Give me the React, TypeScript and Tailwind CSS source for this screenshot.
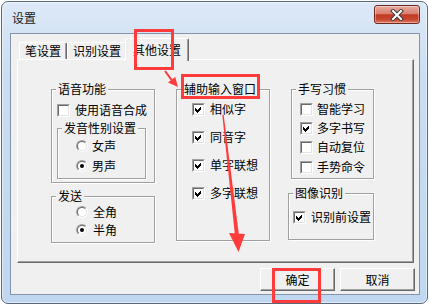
import React from 'react';

const RED = '#ff3b3b';

function CheckBox({ checked }: { checked?: boolean }) {
  return (
    <div className="w-[13px] h-[13px] shrink-0 border border-t-[#a0a0a0] border-l-[#a0a0a0] border-b-white border-r-white">
      <div className="w-full h-full border border-t-[#696969] border-l-[#696969] border-b-[#e3e3e3] border-r-[#e3e3e3] bg-white flex items-center justify-center">
        {checked && (
          <svg width="9" height="9" viewBox="0 0 9 9" shapeRendering="crispEdges">
            <path d="M1 3 L3 5 L7 1 L7 4 L3 8 L1 6 Z" fill="#000" />
          </svg>
        )}
      </div>
    </div>
  );
}

function Radio({ checked }: { checked?: boolean }) {
  return (
    <div className="w-[12px] h-[12px] shrink-0 rounded-full border border-t-[#a0a0a0] border-l-[#a0a0a0] border-b-white border-r-white">
      <div className="w-full h-full rounded-full border border-t-[#696969] border-l-[#696969] border-b-[#e3e3e3] border-r-[#e3e3e3] bg-white flex items-center justify-center">
        {checked && <div className="w-[4px] h-[4px] rounded-full bg-black" />}
      </div>
    </div>
  );
}

function Group({
  title,
  className,
  titleClass,
  children,
}: {
  title: string;
  className: string;
  titleClass: string;
  children: React.ReactNode;
}) {
  return (
    <div
      className={`border border-[#a0a0a0] shadow-[inset_1px_1px_0_#fff,1px_1px_0_#fff] flex flex-col ${className}`}
    >
      <div className={`-mt-[8px] self-start bg-[#f0f0f0] px-[2px] h-[14px] leading-[14px] ${titleClass}`}>
        {title}
      </div>
      {children}
    </div>
  );
}

function Tab({ label, active, className }: { label: string; active?: boolean; className: string }) {
  if (active) {
    return (
      <div
        className={`relative z-10 -ml-[2px] h-[23px] bg-[#f0f0f0] border-t border-l border-r border-t-white border-l-white border-r-[#696969] rounded-t-[2px] shadow-[inset_-1px_0_0_#a0a0a0] flex justify-center pt-[4px] leading-[14px] ${className}`}
      >
        {label}
      </div>
    );
  }
  return (
    <div
      className={`mb-[2px] h-[17px] border-t border-l border-r border-t-white border-l-white border-r-[#696969] rounded-t-[2px] shadow-[inset_-1px_0_0_#a0a0a0] flex items-center justify-center leading-[14px] ${className}`}
    >
      {label}
    </div>
  );
}

function Button({ label }: { label: string }) {
  return (
    <div className="w-[75px] h-[23px] border border-t-white border-l-white border-r-[#696969] border-b-[#696969] shadow-[inset_-1px_-1px_0_#a0a0a0,0_0_0_0_#000] bg-[#f0f0f0] flex items-center justify-center leading-[14px]">
      {label}
    </div>
  );
}

export default function App() {
  return (
    <div className="relative w-[429px] h-[306px] overflow-hidden bg-white text-[12px] text-black font-['Noto_Sans_CJK_SC','Noto_Sans',sans-serif]">
      {/* Window */}
      <div className="ml-[1px] mt-[1px] w-[427px] h-[303px] rounded-[7px] border border-[#5b6878] bg-[linear-gradient(180deg,#dde9f7_0%,#c9ddf2_25%,#bfd7f0_100%)] shadow-[inset_0_0_0_1px_rgba(255,255,255,0.55)] flex flex-col pl-[8px] pr-[7px] pb-[8px]">
        {/* Title bar */}
        <div className="h-[31px] flex items-start justify-between">
          <div className="ml-[2px] mt-[9px] leading-[14px] text-[#1a1a1a]">设置</div>
          <div className="mt-[3px] w-[46px] h-[19px] rounded-[3px] border border-[#6e2a22] bg-[linear-gradient(180deg,#e9aca0_0%,#d98070_45%,#c23a25_52%,#c8452f_78%,#e07d62_100%)] shadow-[inset_0_0_0_1px_rgba(255,255,255,0.35)] flex items-center justify-center">
            <svg width="14" height="12" viewBox="0 0 14 12">
              <path d="M3 2 L11 10 M11 2 L3 10" stroke="#3c3c3c" strokeWidth="4" strokeLinecap="square" />
              <path d="M3 2 L11 10 M11 2 L3 10" stroke="#fff" strokeWidth="2" strokeLinecap="square" />
            </svg>
          </div>
        </div>

        {/* Client area */}
        <div className="w-[410px] h-[262px] border border-[#8394ab] bg-[#f0f0f0] flex flex-col pt-[4px]">
          {/* Tabs */}
          <div className="flex items-end ml-[8px]">
            <Tab label="笔设置" className="w-[48px]" />
            <Tab label="识别设置" className="w-[60px]" />
            <Tab label="其他设置" active className="w-[64px]" />
          </div>

          {/* Panel */}
          <div className="-mt-[2px] ml-[6px] w-[397px] h-[204px] border border-t-white border-l-white border-r-[#696969] border-b-[#696969] shadow-[inset_-1px_-1px_0_#a0a0a0] flex items-start pl-[33px] pt-[29px]">
            {/* Column 1 */}
            <div className="w-[104px] flex flex-col">
              <Group title="语音功能" className="w-[104px] h-[94px]" titleClass="ml-[4px]">
                <div className="mt-[7px] ml-[5px] h-[14px] flex items-center gap-[5px]">
                  <CheckBox />
                  <span>使用语音合成</span>
                </div>
                <Group title="发音性别设置" className="mt-[11px] ml-[5px] w-[89px] h-[51px]" titleClass="ml-[4px]">
                  <div className="mt-[4px] ml-[18px] h-[14px] flex items-center gap-[4px]">
                    <Radio />
                    <span>女声</span>
                  </div>
                  <div className="mt-[6px] ml-[18px] h-[14px] flex items-center gap-[4px]">
                    <Radio checked />
                    <span>男声</span>
                  </div>
                </Group>
              </Group>
              <Group title="发送" className="mt-[13px] w-[104px] h-[47px]" titleClass="ml-[4px]">
                <div className="mt-[2px] ml-[24px] h-[14px] flex items-center gap-[5px]">
                  <Radio />
                  <span>全角</span>
                </div>
                <div className="mt-[4px] ml-[24px] h-[14px] flex items-center gap-[5px]">
                  <Radio checked />
                  <span>半角</span>
                </div>
              </Group>
            </div>

            {/* Column 2 */}
            <div className="ml-[21px] w-[94px] flex flex-col">
              <Group title="辅助输入窗口" className="w-[94px] h-[152px]" titleClass="ml-[5px]">
                {['相似字', '同音字', '单字联想', '多字联想'].map((label, i) => (
                  <div
                    key={label}
                    className={`${i === 0 ? 'mt-[6px]' : 'mt-[14px]'} ml-[15px] h-[14px] flex items-center gap-[5px]`}
                  >
                    <CheckBox checked />
                    <span>{label}</span>
                  </div>
                ))}
              </Group>
            </div>

            {/* Column 3 */}
            <div className="ml-[18px] w-[86px] flex flex-col items-end">
              <Group title="手写习惯" className="w-[83px] h-[90px]" titleClass="ml-[4px]">
                <div className="mt-[6px] ml-[8px] h-[14px] flex items-center gap-[4px]">
                  <CheckBox />
                  <span>智能学习</span>
                </div>
                <div className="mt-[5px] ml-[8px] h-[14px] flex items-center gap-[4px]">
                  <CheckBox checked />
                  <span>多字书写</span>
                </div>
                <div className="mt-[5px] ml-[8px] h-[14px] flex items-center gap-[4px]">
                  <CheckBox />
                  <span>自动复位</span>
                </div>
                <div className="mt-[6px] ml-[8px] h-[14px] flex items-center gap-[4px]">
                  <CheckBox />
                  <span>手势命令</span>
                </div>
              </Group>
              <Group title="图像识别" className="mt-[14px] w-[86px] h-[47px]" titleClass="ml-[4px]">
                <div className="mt-[10px] ml-[4px] h-[14px] flex items-center gap-[5px]">
                  <CheckBox checked />
                  <span>识别前设置</span>
                </div>
              </Group>
            </div>
          </div>

          {/* Buttons */}
          <div className="mt-[5px] pr-[4px] flex justify-end gap-[5px]">
            <Button label="确定" />
            <Button label="取消" />
          </div>
        </div>
      </div>

      {/* Red annotations */}
      <svg className="absolute inset-0 pointer-events-none z-20" width="429" height="306" viewBox="0 0 429 306">
        <rect x="135.5" y="30.5" width="37" height="38" fill="none" stroke={RED} strokeWidth="3" />
        <rect x="182.5" y="75.5" width="76" height="22" fill="none" stroke={RED} strokeWidth="3" />
        <rect x="273.5" y="269.5" width="46" height="32" fill="none" stroke={RED} strokeWidth="3" />
        <line x1="165" y1="71" x2="171.6" y2="79.8" stroke={RED} strokeWidth="2" />
        <polygon points="168,82.5 175.2,77.1 178,87" fill={RED} />
        <polygon points="222.3,115 223.7,115 238.8,234 234.8,234" fill={RED} />
        <polygon points="229,233 245,234 238.5,252" fill={RED} />
      </svg>
    </div>
  );
}
